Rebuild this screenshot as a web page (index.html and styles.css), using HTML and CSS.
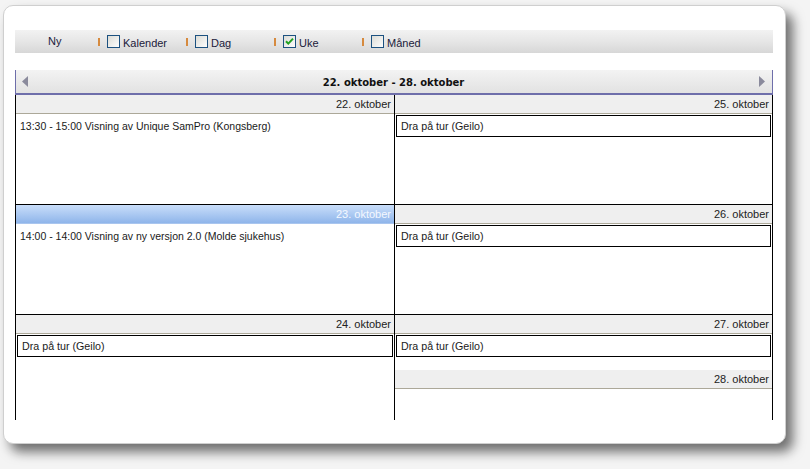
FILE: index.html
```html
<!DOCTYPE html>
<html lang="no">
<head>
<meta charset="utf-8">
<title>Kalender</title>
<link rel="stylesheet" href="styles.css">
</head>
<body>
<div class="card">
  <div class="toolbar">
    <div class="tb-new">Ny</div>
    <div class="tb-group"><span class="sep"></span><span class="cb"></span><span class="lbl">Kalender</span></div>
    <div class="tb-group"><span class="sep"></span><span class="cb"></span><span class="lbl">Dag</span></div>
    <div class="tb-group"><span class="sep"></span><span class="cb"><svg class="check" viewBox="0 0 11 11" width="11" height="11"><path d="M2 5.2 L4.3 7.6 L9 2.6" fill="none" stroke="#21a121" stroke-width="2"/></svg></span><span class="lbl">Uke</span></div>
    <div class="tb-group"><span class="sep"></span><span class="cb"></span><span class="lbl">Måned</span></div>
  </div>

  <div class="nav">
    <svg class="arrow" viewBox="0 0 7 11" width="7" height="11"><path d="M6 0 L0 5.5 L6 11 Z" fill="#8a8a9c"/></svg>
    <span class="title">22. oktober - 28. oktober</span>
    <svg class="arrow" viewBox="0 0 7 11" width="7" height="11"><path d="M1 0 L7 5.5 L1 11 Z" fill="#8a8a9c"/></svg>
  </div>

  <div class="week">
    <div class="day left">
      <div class="dh">22. oktober</div>
      <div class="dc"><div class="ev">13:30 - 15:00 Visning av Unique SamPro (Kongsberg)</div></div>
    </div>
    <div class="day">
      <div class="dh">25. oktober</div>
      <div class="dc"><div class="box">Dra på tur (Geilo)</div></div>
    </div>
    <div class="day left">
      <div class="dh today">23. oktober</div>
      <div class="dc"><div class="ev">14:00 - 14:00 Visning av ny versjon 2.0 (Molde sjukehus)</div></div>
    </div>
    <div class="day">
      <div class="dh">26. oktober</div>
      <div class="dc"><div class="box">Dra på tur (Geilo)</div></div>
    </div>
    <div class="day left">
      <div class="dh">24. oktober</div>
      <div class="dc"><div class="box">Dra på tur (Geilo)</div></div>
    </div>
    <div class="day">
      <div class="half">
        <div class="dh">27. oktober</div>
        <div class="box">Dra på tur (Geilo)</div>
      </div>
      <div class="dh">28. oktober</div>
      <div class="dc"></div>
    </div>
  </div>
</div>
</body>
</html>
```

FILE: styles.css
```css
html, body {
  margin: 0;
  padding: 0;
}
body {
  background: #f4f4f4;
  width: 810px;
  height: 469px;
  overflow: hidden;
  font-family: "Liberation Sans", Arial, sans-serif;
  font-size: 11px;
  color: #1a1a1a;
}
.card {
  box-sizing: border-box;
  margin: 5px 0 0 3px;
  width: 783px;
  height: 439px;
  padding: 24px 12px 0 11px;
  background: #fff;
  border: 1px solid #cfcfcf;
  border-radius: 10px;
  box-shadow: 7px 8px 12px rgba(0, 0, 0, 0.55);
}

/* toolbar */
.toolbar {
  height: 23px;
  display: flex;
  align-items: center;
  background: linear-gradient(#f2f2f2, #e6e6e6 50%, #d7d7d7);
}
.tb-new {
  width: 83px;
  box-sizing: border-box;
  padding-left: 33px;
  color: #20203a;
  margin-top: -2px;
}
.tb-group {
  width: 88px;
  display: flex;
  align-items: center;
}
.sep {
  width: 2px;
  height: 8px;
  background: #d68a3e;
  margin-right: 7px;
  margin-top: 1px;
}
.cb {
  box-sizing: border-box;
  width: 13px;
  height: 13px;
  border: 1px solid #1c5180;
  background: linear-gradient(135deg, #dcdcd6, #fdfdfd);
  display: flex;
  align-items: center;
  justify-content: center;
}
.check {
  display: block;
}
.lbl {
  margin-left: 3px;
  color: #20203a;
  padding-top: 3px;
}

/* nav */
.nav {
  margin-top: 17px;
  height: 23px;
  display: flex;
  align-items: center;
  justify-content: space-between;
  padding: 0 7px 0 6px;
  background: linear-gradient(#f3f3f3, #e2e2e2);
  border-left: 1px solid #6e6eaa;
  border-right: 1px solid #6e6eaa;
  border-bottom: 2px solid #6e6eaa;
}
.arrow {
  display: block;
}
.title {
  font-family: "DejaVu Sans", Verdana, sans-serif;
  font-weight: bold;
  font-size: 10px;
  color: #111;
  padding-top: 1px;
}

/* week grid */
.week {
  display: grid;
  grid-template-columns: 379px 377px;
  grid-auto-rows: 110px;
  height: 325px;
  overflow: hidden;
  border-left: 1px solid #000;
  border-right: 1px solid #000;
}
.day {
  box-sizing: border-box;
  border-bottom: 1px solid #000;
  display: flex;
  flex-direction: column;
}
.day.left {
  border-right: 1px solid #000;
}
.dh {
  height: 18px;
  line-height: 18px;
  text-align: right;
  padding-right: 3px;
  background: #efefef;
  border-bottom: 1px solid #aca899;
  color: #222;
  flex: none;
}
.dh.today {
  background: linear-gradient(#c9defa, #8fb5ea);
  border-bottom-color: #a9c5ee;
  color: #f4f8ff;
}
.dc {
  flex: 1;
}
.ev {
  padding: 5px 4px;
  line-height: 14px;
  font-size: 10.5px;
}
.box {
  margin: 1px 1px 0 1px;
  border: 1px solid #000;
  height: 20px;
  line-height: 20px;
  padding-left: 4px;
  font-size: 10.7px;
}
.half {
  height: 55px;
  flex: none;
}
```
